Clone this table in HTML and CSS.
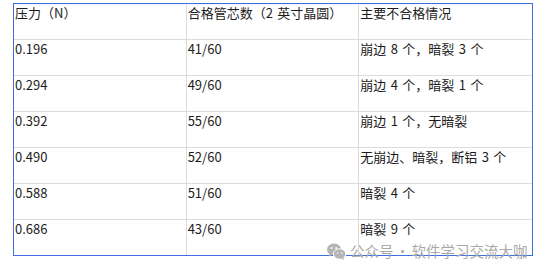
FILE: index.html
```html
<!DOCTYPE html>
<html lang="zh">
<head>
<meta charset="utf-8">
<link rel="stylesheet" href="styles.css">
</head>
<body>
<table class="data">
  <tr><td>压力（N）</td><td>合格管芯数（2 英寸晶圆）</td><td>主要不合格情况</td></tr>
  <tr><td>0.196</td><td>41/60</td><td>崩边 8 个，暗裂 3 个</td></tr>
  <tr><td>0.294</td><td>49/60</td><td>崩边 4 个，暗裂 1 个</td></tr>
  <tr><td>0.392</td><td>55/60</td><td>崩边 1 个，无暗裂</td></tr>
  <tr><td>0.490</td><td>52/60</td><td>无崩边、暗裂，断铝 3 个</td></tr>
  <tr><td>0.588</td><td>51/60</td><td>暗裂 4 个</td></tr>
  <tr><td>0.686</td><td>43/60</td><td>暗裂 9 个</td></tr>
</table>
<div class="watermark">
  <svg class="wm-icon" width="19" height="17" viewBox="0 0 19 17">
    <ellipse cx="7" cy="6.5" rx="7" ry="6" fill="#b4b4b4"/>
    <path d="M2.5 10.5 L1.8 13.6 L5.2 11.8 Z" fill="#b4b4b4"/>
    <ellipse cx="12.6" cy="11" rx="6.2" ry="5.2" fill="#b4b4b4" stroke="#fff" stroke-width="1"/>
    <path d="M16.2 14.5 L17.2 16.8 L14.2 15.6 Z" fill="#b4b4b4"/>
    <circle cx="4.6" cy="5" r="1" fill="#fff"/>
    <circle cx="9.2" cy="5" r="1" fill="#fff"/>
    <circle cx="10.6" cy="10" r="0.8" fill="#fff"/>
    <circle cx="14.6" cy="10" r="0.8" fill="#fff"/>
  </svg>
  <span class="wm-text">公众号 · 软件学习交流大咖</span>
</div>
</body>
</html>
```
FILE: styles.css
```css
html, body {
  background: #fff;
}
body {
  margin: 3px 0 0 13px;
  font-family: "Noto Sans CJK SC", "Noto Sans", sans-serif;
  font-size: 13px;
  color: #1c1c1c;
}
.data {
  width: 520px;
  table-layout: fixed;
  border-collapse: separate;
  border-spacing: 0;
  border: 1px solid #3d6fe3;
}
.data td {
  height: 35px;
  padding: 0 1px;
  vertical-align: top;
  line-height: 18px;
  word-spacing: 1.5px;
  border-right: 1px solid #dcdcdc;
  border-bottom: 1px solid #dcdcdc;
  box-sizing: content-box;
  white-space: nowrap;
}
.data td:last-child {
  border-right: none;
}
.data tr:last-child td {
  border-bottom: none;
}
.watermark {
  position: absolute;
  left: 327px;
  top: 241px;
  display: flex;
  align-items: center;
  gap: 4px;
}
.wm-icon {
  display: block;
}
.wm-text {
  font-size: 14.5px;
  line-height: 20px;
  color: #a9a9a9;
  word-spacing: -1.5px;
}
```
